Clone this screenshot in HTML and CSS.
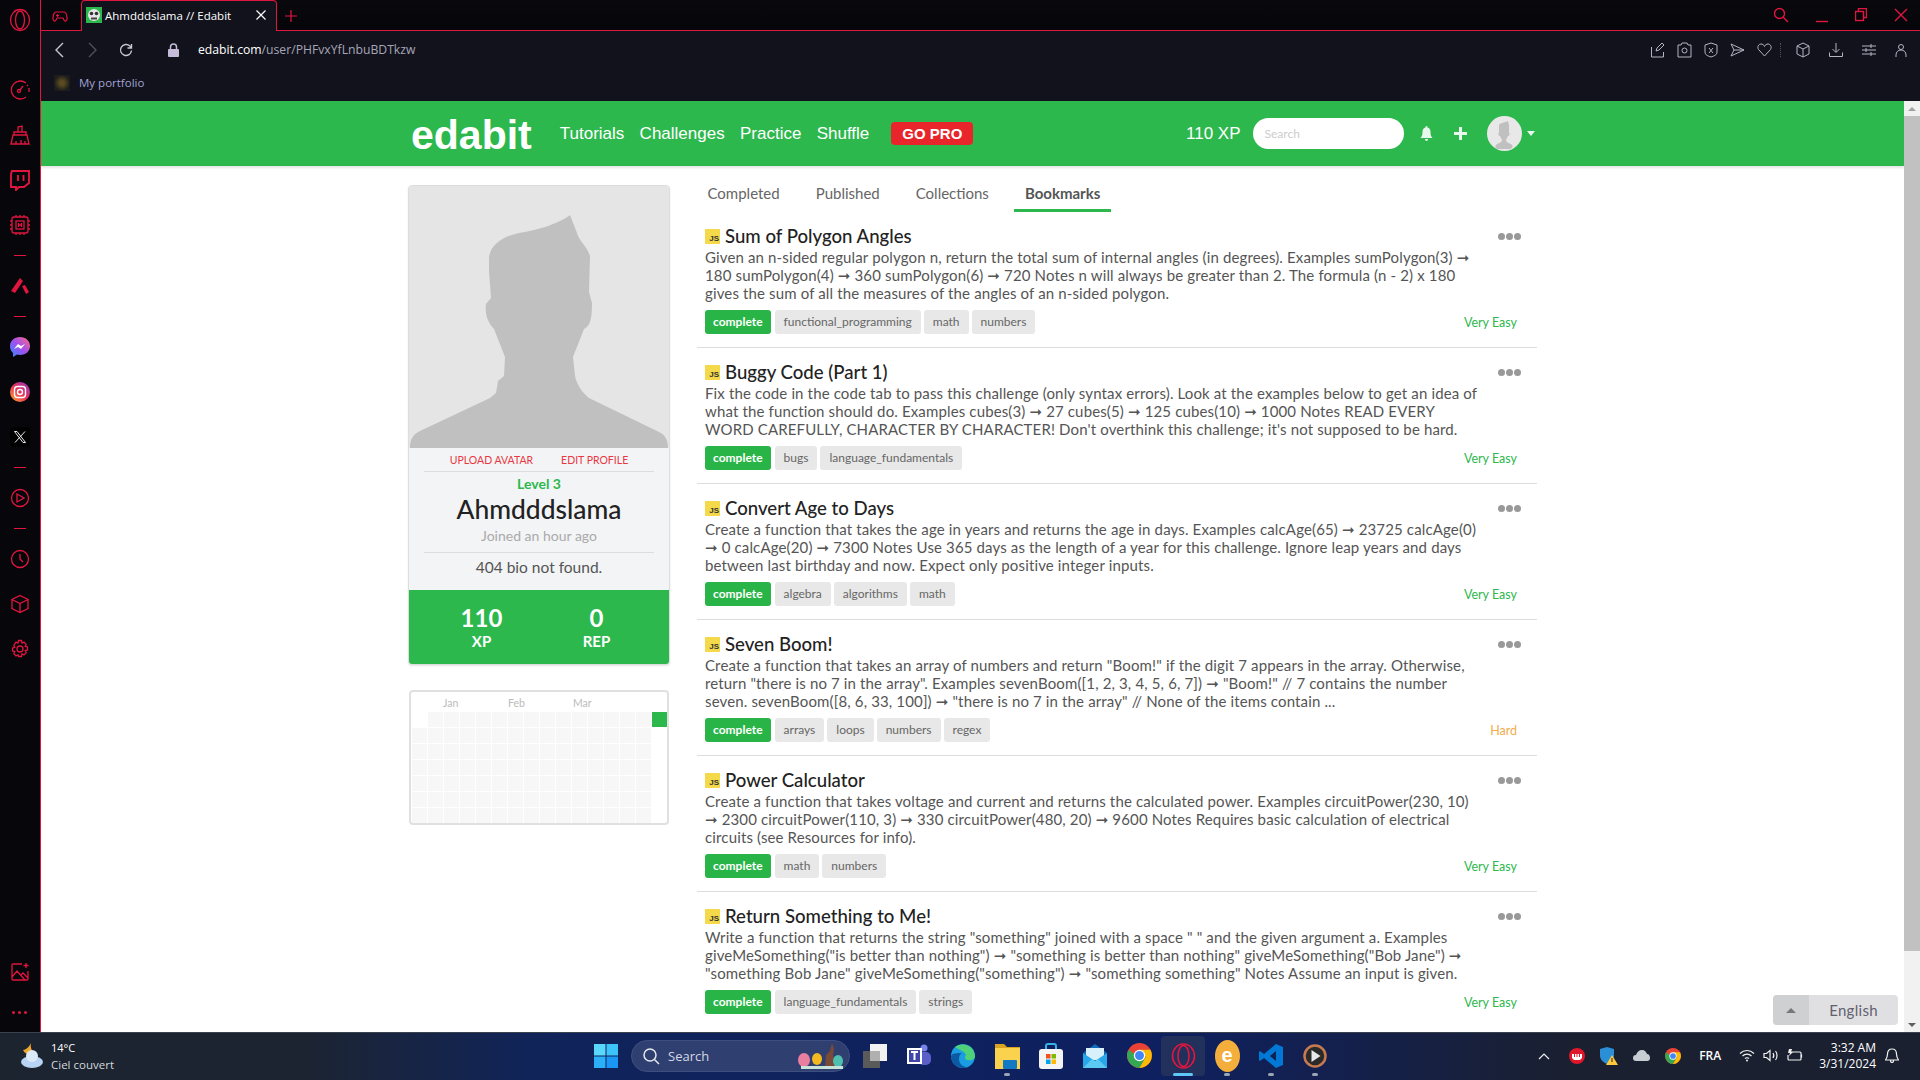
FILE: index.html
```html
<!DOCTYPE html>
<html lang="en">
<head>
  <meta charset="UTF-8">
  <title>Ahmdddslama // Edabit</title>
  <link rel="stylesheet" href="styles.css">
</head>
<body>

<div class="browser">
  <aside class="side">
    <div class="side-logo">
      <svg width="22" height="24" viewBox="0 0 22 24"><ellipse cx="11" cy="12" rx="9.5" ry="10.5"/><ellipse cx="11" cy="12" rx="4.5" ry="9"/></svg>
    </div>
    <div class="side-slot"><svg width="22" height="22" viewBox="0 0 22 22"><path d="M17 4A9 9 0 1 0 17 18M20 9v4M18 6l1 1"/><circle cx="10" cy="12" r="1.5"/><path d="M11 11l3-4"/></svg></div>
    <div class="side-slot"><svg width="22" height="22" viewBox="0 0 22 22"><path d="M2 20l2-9h14l2 9zM5 11V8h12v3M9 8V3l4-1v6M7 20v-3M12 20v-4M16 20v-3"/></svg></div>
    <div class="side-slot"><svg class="thick" width="22" height="22" viewBox="0 0 22 22"><path d="M3 2h17v12l-5 4h-5l-3 3v-3H2V5z"/><path d="M9 6v6M14.500 6v6"/></svg></div>
    <div class="side-slot"><svg width="22" height="22" viewBox="0 0 22 22"><rect x="3" y="3" width="16" height="16" rx="2"/><rect x="7" y="7" width="8" height="8"/><path d="M9.500 9v4M12.500 9v4M9.500 11h3M1 7h2M1 11h2M1 15h2M19 7h2M19 11h2M19 15h2M7 1v2M11 1v2M15 1v2M7 19v2M11 19v2M15 19v2"/></svg></div>
    <div class="side-dash"></div>
    <div class="side-slot"><svg width="20" height="20" viewBox="0 0 20 20"><path class="solid" d="M10 2l3 3-8 12-4-2zM12 10l3-1 4 7-3 2z"/></svg></div>
    <div class="side-dash"></div>
    <div class="side-slot">
      <svg width="22" height="22" viewBox="0 0 22 22"><defs><linearGradient id="msg" x1="0" y1="1" x2="1" y2="0"><stop offset="0" stop-color="#2f8cff"/><stop offset=".5" stop-color="#a050f0"/><stop offset="1" stop-color="#ff6a80"/></linearGradient></defs><path class="plain" fill="url(#msg)" d="M11 1c6 0 10 4 10 9s-4 9-10 9l-3-.4L4 21v-4C2 15 1 13 1 10c0-5 4-9 10-9z"/><path class="plain" fill="#fff" d="M5 13l4-5 3 2 4-2-4 5-3-2z"/></svg>
    </div>
    <div class="side-slot">
      <svg width="20" height="20" viewBox="0 0 20 20"><defs><linearGradient id="insta" x1="0" y1="1" x2="1" y2="0"><stop offset="0" stop-color="#fdb32b"/><stop offset=".5" stop-color="#e8305c"/><stop offset="1" stop-color="#8a3ac8"/></linearGradient></defs><circle class="plain" fill="url(#insta)" cx="10" cy="10" r="10"/><rect class="white" x="4.500" y="4.500" width="11" height="11" rx="3"/><circle class="white" cx="10" cy="10" r="2.500"/></svg>
    </div>
    <div class="side-slot"><span class="x-mark"><svg width="12" height="12" viewBox="0 0 12 12"><path class="white-thin" d="M.5.5h2.500l8.500 11H9zM11 .5L1 11.500"/></svg></span></div>
    <div class="side-dash"></div>
    <div class="side-slot"><svg width="20" height="20" viewBox="0 0 20 20"><circle cx="10" cy="10" r="8.500"/><path d="M7 6l7 4-7 4z"/></svg></div>
    <div class="side-dash"></div>
    <div class="side-slot"><svg width="20" height="20" viewBox="0 0 20 20"><circle cx="10" cy="10" r="8.500"/><path d="M10 5v5l3 3"/></svg></div>
    <div class="side-slot"><svg width="20" height="20" viewBox="0 0 20 20"><path d="M10 1.500l8 4v9l-8 4-8-4v-9zM2 5.500l8 4 8-4M10 9.500v9"/></svg></div>
    <div class="side-slot"><svg width="20" height="20" viewBox="0 0 20 20"><circle cx="10" cy="10" r="3"/><path d="M8.500 1.500h3l.5 2.500 2-.9 2.200 2.200-1 2.100 2.300.6v3l-2.300.6 1 2.100-2.200 2.200-2-.9-.5 2.500h-3L8 16l-2 .9-2.200-2.200 1-2.100-2.300-.6v-3l2.300-.6-1-2.100L6 3.100l2 .9z"/></svg></div>
    <div class="side-bottom">
      <div class="side-tail"><svg width="20" height="20" viewBox="0 0 20 20"><path d="M12 2H3a1 1 0 0 0-1 1v14a1 1 0 0 0 1 1h14a1 1 0 0 0 1-1V9M2 15l5-6 8 9M11 13l2-2 5 5M16 1v5M13.500 3.500h5"/></svg></div>
      <div class="side-tail"><span class="side-dots"><i></i><i></i><i></i></span></div>
    </div>
  </aside>

  <div class="window">
    <div class="tabbar">
      <div class="tab-game"><svg width="16" height="14" viewBox="0 0 16 14"><path d="M4 2h8c2 0 3 3 3 7 0 2-2 3-3 1l-1-2H5L4 10c-1 2-3 1-3-1 0-4 1-7 3-7z"/><path d="M4 5.500h3M5.500 4v3"/></svg></div>
      <div class="tab">
        <svg class="favicon" width="16" height="16" viewBox="0 0 16 16"><rect width="16" height="16" fill="#2db84d"/><circle cx="8" cy="8" r="6" fill="#e6e6e6"/><circle cx="5.500" cy="6.500" r="1.800" fill="#333"/><circle cx="10.500" cy="6.500" r="1.800" fill="#333"/><rect x="5" y="10.500" width="6" height="2" fill="#444"/></svg>
        <span class="tab-title">Ahmdddslama // Edabit</span>
        <svg class="tab-close" width="10" height="10" viewBox="0 0 10 10"><path d="M.500.500l9 9M9.500.500l-9 9"/></svg>
      </div>
      <div class="tab-add"><svg width="12" height="12" viewBox="0 0 12 12"><path d="M6 0v12M0 6h12"/></svg></div>
      <div class="win-btns">
        <svg width="16" height="16" viewBox="0 0 16 16"><circle cx="6.500" cy="6.500" r="5"/><path d="M10 10l5 5"/></svg>
        <svg class="win-min" width="12" height="16" viewBox="0 0 12 16"><path d="M0 14.500h12"/></svg>
        <svg width="12" height="14" viewBox="0 0 12 14"><rect x=".5" y="3.500" width="8" height="9"/><path d="M3.500 3.500v-3h8v9h-3"/></svg>
        <svg width="14" height="14" viewBox="0 0 14 14"><path d="M1 1l12 12M13 1L1 13"/></svg>
      </div>
    </div>

    <div class="toolbar">
      <div class="url-row">
        <svg class="nav-ico" width="10" height="16" viewBox="0 0 10 16"><path d="M8 1L1 8l7 7"/></svg>
        <svg class="nav-ico dim" width="10" height="16" viewBox="0 0 10 16"><path d="M2 1l7 7-7 7"/></svg>
        <svg class="nav-ico" width="14" height="14" viewBox="0 0 14 14"><path d="M12.500 7.500a5.500 5.500 0 1 1-1.600-4.400L12.500 5M12.500 1v4h-4"/></svg>
        <svg class="lock" width="11" height="14" viewBox="0 0 11 14"><rect y="6" width="11" height="8" rx="1"/><path d="M2.500 6V4a3 3 0 0 1 6 0v2" fill="none" stroke="#c4bcd8" stroke-width="1.500"/></svg>
        <div class="url"><b>edabit.com</b>/user/PHFvxYfLnbuBDTkzw</div>
        <div class="tools">
          <svg width="14" height="16" viewBox="0 0 14 16"><path d="M.5 5v10h12v-5M5 9l1-3 5-5 2 2-5 5z"/></svg>
          <svg width="15" height="16" viewBox="0 0 15 16"><path d="M1 3h3l1-2h5l1 2h3v12H1z"/><circle cx="7.500" cy="8.500" r="2.500"/></svg>
          <svg width="14" height="16" viewBox="0 0 14 16"><path d="M7 1l6 2v7c0 3-3 4-6 5-3-1-6-2-6-5V3zM5 6l4 5M9 6l-4 5"/></svg>
          <svg width="15" height="14" viewBox="0 0 15 14"><path d="M1 1l13 6-13 6 3-6zM4 7h10"/></svg>
          <svg width="15" height="14" viewBox="0 0 15 14"><path d="M7.500 13L1.500 6.500C0 4 1.500 1 4 1c1.500 0 3 1 3.500 2.500C8 2 9.500 1 11 1c2.500 0 4 3 2.500 5.500z"/></svg>
          <span class="tool-sep"></span>
          <svg width="14" height="16" viewBox="0 0 14 16"><path d="M7 1l6 3v8l-6 3-6-3V4zM1 4l6 3 6-3M7 7v8"/></svg>
          <svg width="14" height="14" viewBox="0 0 14 14"><path d="M7 0v9M3.500 6L7 9.500 10.500 6M.5 9.500v4h13v-4"/></svg>
          <svg width="14" height="12" viewBox="0 0 14 12"><path d="M0 2h14M0 6h14M0 10h14M9 0v4M4 4v4M9 8v4"/></svg>
          <svg width="12" height="14" viewBox="0 0 12 14"><circle cx="6" cy="4" r="2.500"/><path d="M1 14v-2c0-3 2-5 5-5s5 2 5 5v2"/></svg>
        </div>
      </div>
      <div class="bookmarks">
        <span class="bm-icon"></span>
        <span>My portfolio</span>
      </div>
    </div>

    <div class="viewport">
      <div class="page">
        <header class="site-head">
          <div class="wrap head-row">
            <div class="logo">edabit</div>
            <nav class="site-nav">
              <a>Tutorials</a>
              <a>Challenges</a>
              <a>Practice</a>
              <a>Shuffle</a>
            </nav>
            <div class="go-pro">GO PRO</div>
            <div class="head-right">
              <span class="head-xp">110 XP</span>
              <div class="search">Search</div>
              <svg class="head-ico" width="13" height="15" viewBox="0 0 13 15"><path d="M6.500 0c1 0 1 1 1 1.500 2 .5 3 2 3 4.500 0 3 .5 4 2 6H.5c1.500-2 2-3 2-6 0-2.500 1-4 3-4.500C5.500 1 5.500 0 6.500 0zM5 13h3c0 1-.5 2-1.500 2S5 14 5 13z"/></svg>
              <svg class="head-ico plus" width="13" height="13" viewBox="0 0 13 13"><path d="M5 0h3v5h5v3H8v5H5V8H0V5h5z"/></svg>
              <div class="head-avatar">
                <svg width="35" height="35" viewBox="0 0 35 35"><path fill="#c0c0c0" d="M21 5c-3 2-7 1-9 4v8c-1 0-1 3 1 3l2 4c0 3-4 3-6 5-1 1-1 3 1 4h13c3-1 3-3 2-4-2-2-6-2-6-5l2-4c2 0 2-3 1-3V9z"/></svg>
              </div>
              <span class="caret"></span>
            </div>
          </div>
        </header>

        <main class="wrap main">
          <div class="left">
            <section class="card">
              <div class="avatar">
                <svg width="260" height="262" viewBox="0 0 260 262"><path fill="#c0c0c0" d="M161 29C150 38 125 45 110 47 95 50 81 58 80 72L80 85 82 112 77 118C76 125 77 135 85 143L96 171 95 190 89 195 87 207 81 212 11 245C5 248 1 252 1 262H259C259 252 255 248 248 245L180 212C175 208 168 200 166 190L164 171 175 143C182 140 183 130 183 117L180 106 181 70C178 60 170 55 168 47z"/></svg>
              </div>
              <div class="card-body">
                <div class="card-links"><a>UPLOAD AVATAR</a><a>EDIT PROFILE</a></div>
                <div class="level">Level 3</div>
                <div class="name">Ahmdddslama</div>
                <div class="joined">Joined an hour ago</div>
                <div class="bio">404 bio not found.</div>
              </div>
              <div class="stats">
                <div class="stat"><b>110</b><span>XP</span></div>
                <div class="stat"><b>0</b><span>REP</span></div>
              </div>
            </section>

            <section class="heatmap">
              <div class="months"><span>Jan</span><span>Feb</span><span>Mar</span></div>
              <div class="cells">
                <i class="none"></i><i></i><i></i><i></i><i></i><i></i><i></i><i></i><i></i><i></i><i></i><i></i><i></i><i></i><i></i><i class="on"></i>
                <i></i><i></i><i></i><i></i><i></i><i></i><i></i><i></i><i></i><i></i><i></i><i></i><i></i><i></i><i></i><i class="none"></i>
                <i></i><i></i><i></i><i></i><i></i><i></i><i></i><i></i><i></i><i></i><i></i><i></i><i></i><i></i><i></i><i class="none"></i>
                <i></i><i></i><i></i><i></i><i></i><i></i><i></i><i></i><i></i><i></i><i></i><i></i><i></i><i></i><i></i><i class="none"></i>
                <i></i><i></i><i></i><i></i><i></i><i></i><i></i><i></i><i></i><i></i><i></i><i></i><i></i><i></i><i></i><i class="none"></i>
                <i></i><i></i><i></i><i></i><i></i><i></i><i></i><i></i><i></i><i></i><i></i><i></i><i></i><i></i><i></i><i class="none"></i>
                <i></i><i></i><i></i><i></i><i></i><i></i><i></i><i></i><i></i><i></i><i></i><i></i><i></i><i></i><i></i><i class="none"></i>
              </div>
            </section>
          </div>

          <div class="right">
            <div class="tabs">
              <a>Completed</a>
              <a>Published</a>
              <a>Collections</a>
              <a class="active">Bookmarks</a>
            </div>

            <article class="item">
              <div class="item-head"><span class="js">JS</span><h3>Sum of Polygon Angles</h3><span class="more"><i></i><i></i><i></i></span></div>
              <p>Given an n-sided regular polygon n, return the total sum of internal angles (in degrees). Examples sumPolygon(3) ➞ 180 sumPolygon(4) ➞ 360 sumPolygon(6) ➞ 720 Notes n will always be greater than 2. The formula (n - 2) x 180 gives the sum of all the measures of the angles of an n-sided polygon.</p>
              <div class="tags"><span class="tag done">complete</span><span class="tag">functional_programming</span><span class="tag">math</span><span class="tag">numbers</span><span class="diff">Very Easy</span></div>
            </article>

            <article class="item">
              <div class="item-head"><span class="js">JS</span><h3>Buggy Code (Part 1)</h3><span class="more"><i></i><i></i><i></i></span></div>
              <p>Fix the code in the code tab to pass this challenge (only syntax errors). Look at the examples below to get an idea of what the function should do. Examples cubes(3) ➞ 27 cubes(5) ➞ 125 cubes(10) ➞ 1000 Notes READ EVERY WORD CAREFULLY, CHARACTER BY CHARACTER! Don't overthink this challenge; it's not supposed to be hard.</p>
              <div class="tags"><span class="tag done">complete</span><span class="tag">bugs</span><span class="tag">language_fundamentals</span><span class="diff">Very Easy</span></div>
            </article>

            <article class="item">
              <div class="item-head"><span class="js">JS</span><h3>Convert Age to Days</h3><span class="more"><i></i><i></i><i></i></span></div>
              <p>Create a function that takes the age in years and returns the age in days. Examples calcAge(65) ➞ 23725 calcAge(0) ➞ 0 calcAge(20) ➞ 7300 Notes Use 365 days as the length of a year for this challenge. Ignore leap years and days between last birthday and now. Expect only positive integer inputs.</p>
              <div class="tags"><span class="tag done">complete</span><span class="tag">algebra</span><span class="tag">algorithms</span><span class="tag">math</span><span class="diff">Very Easy</span></div>
            </article>

            <article class="item">
              <div class="item-head"><span class="js">JS</span><h3>Seven Boom!</h3><span class="more"><i></i><i></i><i></i></span></div>
              <p>Create a function that takes an array of numbers and return "Boom!" if the digit 7 appears in the array. Otherwise, return "there is no 7 in the array". Examples sevenBoom([1, 2, 3, 4, 5, 6, 7]) ➞ "Boom!" // 7 contains the number seven. sevenBoom([8, 6, 33, 100]) ➞ "there is no 7 in the array" // None of the items contain ...</p>
              <div class="tags"><span class="tag done">complete</span><span class="tag">arrays</span><span class="tag">loops</span><span class="tag">numbers</span><span class="tag">regex</span><span class="diff hard">Hard</span></div>
            </article>

            <article class="item">
              <div class="item-head"><span class="js">JS</span><h3>Power Calculator</h3><span class="more"><i></i><i></i><i></i></span></div>
              <p>Create a function that takes voltage and current and returns the calculated power. Examples circuitPower(230, 10) ➞ 2300 circuitPower(110, 3) ➞ 330 circuitPower(480, 20) ➞ 9600 Notes Requires basic calculation of electrical circuits (see Resources for info).</p>
              <div class="tags"><span class="tag done">complete</span><span class="tag">math</span><span class="tag">numbers</span><span class="diff">Very Easy</span></div>
            </article>

            <article class="item">
              <div class="item-head"><span class="js">JS</span><h3>Return Something to Me!</h3><span class="more"><i></i><i></i><i></i></span></div>
              <p>Write a function that returns the string "something" joined with a space " " and the given argument a. Examples giveMeSomething("is better than nothing") ➞ "something is better than nothing" giveMeSomething("Bob Jane") ➞ "something Bob Jane" giveMeSomething("something") ➞ "something something" Notes Assume an input is given.</p>
              <div class="tags"><span class="tag done">complete</span><span class="tag">language_fundamentals</span><span class="tag">strings</span><span class="diff">Very Easy</span></div>
            </article>
          </div>
        </main>

        <div class="lang">
          <span class="lang-arrow"></span>
          <span class="lang-name">English</span>
        </div>
      </div>

      <div class="scrollbar">
        <span class="sb-up"></span>
        <div class="sb-thumb"></div>
        <span class="sb-down"></span>
      </div>
    </div>
  </div>
</div>

<footer class="taskbar">
  <div class="weather">
    <svg width="28" height="28" viewBox="0 0 28 28"><path fill="#f0a830" d="M14 1c-1 5 1 9 5 10-4 3-11 2-13-3 3 0 6-3 8-7z"/><ellipse cx="15" cy="20" rx="11" ry="6" fill="#b8d4f4"/><circle cx="15" cy="14" r="6" fill="#dce9f8"/></svg>
    <div class="weather-text"><b>14°C</b><span>Ciel couvert</span></div>
  </div>

  <div class="task-center">
    <svg class="win-logo" width="24" height="24" viewBox="0 0 24 24"><rect width="11.500" height="11.500" fill="#5ad8fb"/><rect x="12.500" width="11.500" height="11.500" fill="#3cc4fa"/><rect y="12.500" width="11.500" height="11.500" fill="#2bb0f8"/><rect x="12.500" y="12.500" width="11.500" height="11.500" fill="#1a96f5"/></svg>
    <div class="task-search">
      <svg width="18" height="18" viewBox="0 0 18 18"><circle cx="8" cy="8" r="6"/><path d="M12.500 12.500L17 17"/></svg>
      <span>Search</span>
      <svg class="easter" width="48" height="26" viewBox="0 0 48 26"><ellipse cx="7" cy="17" rx="6" ry="7" fill="#e87fa0"/><ellipse cx="20" cy="16" rx="5" ry="6" fill="#f4b820"/><path fill="#7a4a38" d="M28 24l1-12 4-4 2-8 2 6-1 6 3 12z"/><ellipse cx="41" cy="18" rx="5" ry="6" fill="#4ec0b0"/><rect x="4" y="23" width="42" height="3" fill="#c8e4d8"/></svg>
    </div>
    <div class="apps">
      <div class="app"><svg width="24" height="24" viewBox="0 0 24 24"><rect y="7" width="17" height="17" fill="#5a5a5a"/><rect x="7" width="17" height="17" fill="#f2f2f2"/><rect x="7" y="7" width="10" height="10" fill="#b0b0b0"/></svg></div>
      <div class="app"><svg width="26" height="26" viewBox="0 0 26 26"><circle cx="18" cy="5" r="3.500" fill="#7b83eb"/><rect x="12" y="9" width="13" height="13" rx="5" fill="#5b5fc7"/><rect x="1" y="5" width="15" height="16" fill="#fff"/><rect x="3" y="7" width="11" height="12" fill="#3f46a8"/><path fill="#fff" d="M5 8h7v2H9.500v7h-2v-7H5z"/></svg></div>
      <div class="app"><svg width="26" height="26" viewBox="0 0 26 26"><circle cx="13" cy="13" r="12" fill="#1b9de2"/><path fill="#4fd17a" d="M5 4c6-5 19-3 20 9 0 4-5 5-8 4-3-1-2-4-1-5-1-4-7-5-11-8z"/><path fill="#0c59a4" d="M1 13c0 7 6 12 12 12 2 0 3-.5 4-1-5 0-8-4-8-8 0-3 1-5 3-6-5 0-10 0-11 3z"/></svg></div>
      <div class="app has-dot"><svg width="25" height="26" viewBox="0 0 25 26"><path fill="#d9a520" d="M0 1h9l3 3h13v4H0z"/><rect y="5" width="25" height="21" fill="#fad24e"/><rect x="8" y="17" width="14" height="9" rx="1" fill="#1279c4"/></svg></div>
      <div class="app"><svg width="24" height="26" viewBox="0 0 24 26"><path d="M7 7V3a2 2 0 0 1 2-2h6a2 2 0 0 1 2 2v4" fill="none" stroke="#36b4e8" stroke-width="2"/><rect y="6" width="24" height="20" rx="3" fill="#f4f4f4"/><rect x="7" y="11" width="4.500" height="4.500" fill="#f25022"/><rect x="12.500" y="11" width="4.500" height="4.500" fill="#7fba00"/><rect x="7" y="16.500" width="4.500" height="4.500" fill="#00a4ef"/><rect x="12.500" y="16.500" width="4.500" height="4.500" fill="#ffb900"/></svg></div>
      <div class="app"><svg width="26" height="26" viewBox="0 0 26 26"><path fill="#0f6cbd" d="M13 1L1 10l12 8 12-8z"/><rect x="4" y="5" width="18" height="12" fill="#d8f0fa"/><path fill="#28a8ea" d="M1 10v15h24V10L13 18z"/><path fill="#5cc8f4" d="M1 25l9-9 3 2 3-2 9 9z"/></svg></div>
      <div class="app"><svg width="25" height="25" viewBox="0 0 24 24"><circle cx="12" cy="12" r="12" fill="#ea4335"/><path fill="#34a853" d="M1.500 6.500A12 12 0 0 0 12 24l6-10.500H12L7 10.500z"/><path fill="#fbbc05" d="M12 24A12 12 0 0 0 22.500 6.500H12l6 7z"/><circle cx="12" cy="12" r="5.500" fill="#fff"/><circle cx="12" cy="12" r="4.300" fill="#4285f4"/></svg></div>
      <div class="app active"><svg width="25" height="26" viewBox="0 0 25 26"><ellipse class="opera" cx="12.500" cy="13" rx="11" ry="12"/><ellipse class="opera" cx="12.500" cy="13" rx="5.500" ry="10.500"/></svg></div>
      <div class="app has-dot"><span class="eda-ico">e</span></div>
      <div class="app has-dot"><svg width="24" height="26" viewBox="0 0 24 26"><path fill="#0078d4" d="M17 1l7 3v18l-7 3L5 15l-4 3-1-1v-8l1-1 4 3zM17 8l-6 5 6 5z"/></svg></div>
      <div class="app has-dot"><svg width="24" height="26" viewBox="0 0 24 26"><circle cx="12" cy="13" r="10.500" fill="#2a2a2a" stroke="#c57a50" stroke-width="2.500"/><path fill="#e8e8e8" d="M8.500 7l9 6-9 6z"/></svg></div>
    </div>
  </div>

  <div class="tray">
    <svg class="tray-line chev" width="12" height="8" viewBox="0 0 12 8"><path d="M1 7l5-5 5 5"/></svg>
    <svg width="16" height="16" viewBox="0 0 16 16"><circle cx="8" cy="8" r="8" fill="#e0162c"/><path fill="#fff" d="M3 6h10v4l-2 2H5l-2-2z"/><path fill="#e0162c" d="M5 6h1v3H5zM7.500 6h1v3h-1zM10 6h1v3h-1z"/></svg>
    <svg width="18" height="18" viewBox="0 0 18 18"><path fill="#2b8fd8" d="M7 0l7 2v6c0 5-3 7-7 9-4-2-7-4-7-9V2z"/><path fill="#ffc83d" d="M12 8l6 10H6z"/><rect x="11.500" y="11" width="1" height="4" fill="#222"/></svg>
    <svg width="17" height="11" viewBox="0 0 17 11"><path fill="#c8cdd4" d="M3 11a3 3 0 0 1 0-6c1-3 3-5 6-5s4 2 5 4c2 0 3 2 3 4s-1 3-3 3z"/></svg>
    <svg width="16" height="16" viewBox="0 0 24 24"><circle cx="12" cy="12" r="12" fill="#ea4335"/><path fill="#34a853" d="M1.500 6.500A12 12 0 0 0 12 24l6-10.500H12L7 10.500z"/><path fill="#fbbc05" d="M12 24A12 12 0 0 0 22.500 6.500H12l6 7z"/><circle cx="12" cy="12" r="5.500" fill="#fff"/><circle cx="12" cy="12" r="4.300" fill="#4285f4"/></svg>
    <span class="tray-lang">FRA</span>
    <svg class="tray-line" width="16" height="13" viewBox="0 0 16 13"><path d="M1 4.500c4-4 10-4 14 0M3.500 7c2.500-2.500 6.500-2.500 9 0M6 9.500c1-1 3-1 4 0"/><circle class="white-dot" cx="8" cy="11.500" r="1"/></svg>
    <svg class="tray-line near" width="16" height="13" viewBox="0 0 16 13"><path d="M1 4.500v4h2.500L7 11.500V1.500L3.500 4.500zM10 4c1 1.500 1 3.500 0 5M12.500 2c2 2.500 2 6.500 0 9"/></svg>
    <svg class="tray-line near" width="16" height="13" viewBox="0 0 16 13"><path d="M4 3h9a1 1 0 0 1 1 1v6a1 1 0 0 1-1 1H2a1 1 0 0 1-1-1V6M14.500 5.500v3"/><path class="fill-white" d="M2 0l3 0-1 3h2L2 7l1-3H1z"/></svg>
    <div class="clock"><span>3:32 AM</span><span>3/31/2024</span></div>
    <svg class="tray-line tray-bell" width="14" height="15" viewBox="0 0 14 15"><path d="M7 1c3 0 4.500 2 4.500 5 0 2 .5 4 2 6H.5c1.500-2 2-4 2-6C2.500 3 4 1 7 1zM5.500 12.500c0 1 .5 2 1.500 2s1.500-1 1.500-2"/></svg>
  </div>
</footer>

</body>
</html>
```

FILE: styles.css
```css
* {
  box-sizing: border-box;
}
html, body {
  height: 100%;
}
body {
  margin: 0;
  width: 1920px;
  height: 1080px;
  overflow: hidden;
  display: flex;
  flex-direction: column;
  font-family: "Lato", "DejaVu Sans", sans-serif;
  background: #000;
}
.browser {
  flex: 1;
  display: flex;
  min-height: 0;
}

/* opera side strip */
.side {
  width: 41px;
  flex: none;
  background: #06060b;
  border-right: 1px solid #e0163f;
  display: flex;
  flex-direction: column;
  align-items: center;
  padding-right: 1px;
}
.side svg {
  display: block;
  fill: none;
  stroke: #e0163f;
  stroke-width: 1.3;
}
.side svg.thick {
  stroke-width: 1.9;
}
.side .solid {
  fill: #e0163f;
  stroke: none;
  fill-rule: evenodd;
}
.side .plain {
  stroke: none;
}
.side .white {
  stroke: #fff;
  stroke-width: 1.400;
}
.side .white-thin {
  stroke: #e8e8e8;
  stroke-width: 1;
}
.side-logo {
  height: 40px;
  margin-bottom: 27.5px;
  display: flex;
  align-items: center;
}
.side-slot {
  height: 45px;
  display: flex;
  align-items: center;
  justify-content: center;
}
.side-dash {
  height: 16px;
  width: 12px;
  display: flex;
  align-items: center;
}
.side-dash::after {
  content: "";
  width: 12px;
  height: 1px;
  background: #e0163f;
}
.x-mark {
  width: 20px;
  height: 20px;
  border-radius: 4px;
  background: #000;
  display: flex;
  align-items: center;
  justify-content: center;
}
.side-bottom {
  margin-top: auto;
}
.side-tail {
  height: 40px;
  display: flex;
  align-items: center;
  justify-content: center;
}
.side-dots {
  display: flex;
  gap: 3px;
}
.side-dots i {
  width: 3px;
  height: 3px;
  border-radius: 50%;
  background: #e0163f;
}

/* browser window */
.window {
  flex: 1;
  min-width: 0;
  display: flex;
  flex-direction: column;
}
.tabbar {
  height: 31px;
  flex: none;
  display: flex;
  background: linear-gradient(#08080d, #06060a);
  border-bottom: 1px solid #e0163f;
  position: relative;
  padding-left: 40px;
}
.tabbar svg {
  fill: none;
  stroke: #e0163f;
  stroke-width: 1.2;
}
.tab-game {
  position: absolute;
  left: 11px;
  top: 8px;
}
.tab {
  width: 196px;
  height: 31px;
  background: #12121c;
  border: 1px solid #e0163f;
  border-bottom: none;
  border-radius: 4px 4px 0 0;
  display: flex;
  align-items: center;
  padding: 0 10px 2px 4px;
  gap: 3px;
}
.tab .favicon {
  stroke: none;
}
.tab .favicon * {
  stroke: none;
}
.tab-title {
  flex: 1;
  color: #fff;
  font: 11.500px "Open Sans", sans-serif;
  white-space: nowrap;
}
.tab .tab-close {
  stroke: #fff;
}
.tab-add {
  padding: 6px 0 0 8px;
}
.win-btns {
  margin-left: auto;
  display: flex;
  align-items: center;
  gap: 27px;
  padding-right: 12px;
  height: 30px;
}
.win-btns svg {
  stroke-width: 1.400;
}
.toolbar {
  height: 70px;
  flex: none;
  background: #12121c;
  display: flex;
  flex-direction: column;
}
.url-row {
  height: 37px;
  display: flex;
  align-items: center;
  padding-left: 14px;
}
.nav-ico {
  fill: none;
  stroke: #c8c8d4;
  stroke-width: 1.4;
  margin-right: 22px;
}
.nav-ico.dim {
  stroke: #50505c;
}
.lock {
  fill: #c4bcd8;
  margin-left: 13px;
}
.url {
  margin-left: 19px;
  color: #a6a6b8;
  font: 12.200px "Open Sans", sans-serif;
  white-space: nowrap;
}
.url b {
  color: #fff;
  font-weight: 400;
}
.tools {
  margin-left: auto;
  display: flex;
  align-items: center;
  gap: 12px;
  padding-right: 13px;
}
.tools svg {
  fill: none;
  stroke: #b4b4c4;
  stroke-width: 1;
}
.tool-sep {
  height: 14px;
  border-left: 1px dotted #50505c;
  margin: 0 -4px;
}
.tools svg:nth-of-type(n+6) {
  margin-left: 7px;
}
.bookmarks {
  height: 29px;
  display: flex;
  align-items: center;
  padding-left: 15px;
  gap: 9px;
  color: #a0a4d4;
  font: 11.500px "Open Sans", sans-serif;
}
.bm-icon {
  width: 16px;
  height: 16px;
  background: radial-gradient(circle, #5a4a20 20%, #1c1c1c 70%);
  margin-left: -2px;
}

/* page */
.viewport {
  flex: 1;
  min-height: 0;
  display: flex;
}
.page {
  flex: 1;
  min-width: 0;
  background: #fff;
  position: relative;
  overflow: hidden;
}
.wrap {
  width: 1129px;
  margin: 0 auto;
}
.site-head {
  height: 65px;
  background: #2db84d;
  box-shadow: 0 2px 2px rgba(0,0,0,0.1);
}
.head-row {
  height: 65px;
  display: flex;
  align-items: center;
  color: #fff;
  padding: 0 2.500px 0 3px;
}
.logo {
  font: bold 41px "Liberation Sans", Arial, sans-serif;
  margin-top: 3px;
}
.site-nav {
  display: flex;
  gap: 15.300px;
  margin-left: 28px;
  font: 17px "Liberation Sans", Arial, sans-serif;
}
.go-pro {
  margin-left: 22px;
  width: 82px;
  height: 23px;
  line-height: 23px;
  text-align: center;
  background: #e8252b;
  border-radius: 4px;
  font: bold 15px/23px "Liberation Sans", Arial, sans-serif;
}
.head-right {
  margin-left: auto;
  display: flex;
  align-items: center;
}
.head-xp {
  font: 17px "Liberation Sans", Arial, sans-serif;
  margin-right: 12px;
}
.search {
  width: 151px;
  height: 31px;
  border-radius: 16px;
  background: #fff;
  color: #ccc;
  font-size: 12px;
  line-height: 31px;
  padding-left: 12px;
  margin-right: 16px;
}
.head-ico {
  fill: #e8f8ec;
}
.head-ico.plus {
  margin-left: 21px;
}
.head-avatar {
  margin-left: 20px;
  width: 35px;
  height: 35px;
  border-radius: 50%;
  background: #e8e8e8;
  overflow: hidden;
}
.caret {
  margin-left: 5px;
  border-top: 5px solid #e8f8ec;
  border-left: 4.500px solid transparent;
  border-right: 4.500px solid transparent;
}
.main {
  display: flex;
  gap: 27px;
  padding-top: 19px;
}

/* left column */
.left {
  width: 262px;
  flex: none;
}
.card {
  border: 1px solid #ddd;
  border-radius: 4px;
  overflow: hidden;
  background: #f3f4f6;
  box-shadow: 0 1px 2px rgba(0,0,0,0.1);
}
.avatar {
  height: 262px;
  background: #e5e5e5;
}
.avatar svg {
  display: block;
}
.card-body {
  height: 142px;
  padding: 0 15px;
  text-align: center;
}
.card-links {
  height: 24px;
  line-height: 24px;
  display: flex;
  justify-content: center;
  gap: 28px;
  border-bottom: 1px solid #ddd;
  color: #e8383f;
  font-size: 10.500px;
}
.level {
  margin-top: 3px;
  color: #2db84d;
  font-size: 14px;
  font-weight: 700;
  line-height: 18px;
}
.name {
  color: #222;
  font-size: 26.400px;
  font-weight: 500;
  line-height: 32px;
}
.joined {
  height: 28px;
  line-height: 22px;
  color: #aaa;
  font-size: 14px;
  border-bottom: 1px solid #ddd;
}
.bio {
  margin-top: 2px;
  color: #555;
  font-size: 15.500px;
  line-height: 24px;
}
.stats {
  height: 74px;
  background: #2db84d;
  color: #fff;
  display: flex;
  padding: 0 15px;
}
.stat {
  flex: 1;
  display: flex;
  flex-direction: column;
  align-items: center;
  justify-content: center;
}
.stat b {
  font-size: 24px;
  line-height: 28px;
}
.stat span {
  font-size: 15px;
  font-weight: 700;
  line-height: 18px;
}
.heatmap {
  margin-top: 25px;
  margin-left: 1px;
  width: 260px;
  height: 135px;
  border: 2px solid #e0e0e0;
  border-radius: 4px;
  padding-left: 1px;
}
.months {
  height: 20px;
  display: flex;
  padding-left: 31px;
  color: #bbb;
  font-size: 10.500px;
  line-height: 22px;
}
.months span {
  width: 65px;
}
.cells {
  display: grid;
  grid-template-columns: repeat(16, 15px);
  grid-auto-rows: 15px;
  gap: 1px;
}
.cells i {
  background: #f7f7f7;
}
.cells i.none {
  background: none;
}
.cells i.on {
  background: #2db84d;
}

/* challenge list */
.right {
  flex: 1;
  min-width: 0;
}
.tabs {
  display: flex;
  gap: 15px;
  height: 27px;
  margin-bottom: 0;
}
.tabs a {
  padding: 0 10.500px;
  height: 27px;
  line-height: 16px;
  color: #666;
  font-size: 15px;
}
.tabs a.active {
  color: #555;
  font-weight: 700;
  border-bottom: 3px solid #2db84d;
}
.item {
  height: 136px;
  padding: 12px 18px 0 8px;
  border-bottom: 1px solid #ddd;
}
.item:last-child {
  border-bottom: none;
}
.item-head {
  display: flex;
  align-items: center;
  height: 24px;
}
.js {
  width: 15px;
  height: 15px;
  background: #f4d94a;
  color: #333;
  font: bold 8px/20px "Liberation Sans", Arial, sans-serif;
  text-align: right;
  padding-right: 1px;
  margin-right: 5px;
  overflow: hidden;
}
.item h3 {
  margin: 0;
  color: #222;
  font-size: 18.600px;
  font-weight: 500;
  line-height: 24px;
}
.more {
  margin-left: auto;
  margin-right: -2px;
  display: flex;
  gap: 1px;
}
.more i {
  width: 7px;
  height: 7px;
  border-radius: 50%;
  background: #999;
}
.item p {
  margin: 0;
  width: 772px;
  color: #555;
  font-size: 15px;
  letter-spacing: .14px;
  line-height: 18px;
}
.tags {
  display: flex;
  align-items: center;
  gap: 3px;
  margin-top: 8px;
}
.tag {
  height: 24px;
  line-height: 24px;
  padding: 0 9px;
  border-radius: 3px;
  background: #e8e8e8;
  color: #666;
  font-size: 12px;
}
.tag.done {
  padding: 0 8px;
  margin-right: 1px;
  background: #28b446;
  color: #fff;
  font-weight: 700;
}
.diff {
  margin-left: auto;
  margin-right: 2px;
  color: #2db84d;
  font-size: 12.500px;
}
.diff.hard {
  color: #f0ad4e;
}
.lang {
  position: absolute;
  right: 6px;
  bottom: 7px;
  width: 125px;
  height: 30px;
  display: flex;
  border-radius: 4px;
  overflow: hidden;
  background: #e0e0e2;
  color: #606070;
  font-size: 15px;
}
.lang-arrow {
  width: 36px;
  background: #cfd0d2;
  display: flex;
  align-items: center;
  justify-content: center;
}
.lang-arrow::after {
  content: "";
  border-bottom: 5px solid #777;
  border-left: 5px solid transparent;
  border-right: 5px solid transparent;
}
.lang-name {
  flex: 1;
  text-align: center;
  line-height: 30px;
  letter-spacing: .3px;
}
.scrollbar {
  width: 16px;
  flex: none;
  background: #f1f1f1;
  display: flex;
  flex-direction: column;
  align-items: center;
}
.sb-up, .sb-down {
  height: 15px;
  flex: none;
  display: flex;
  align-items: center;
  justify-content: center;
}
.sb-up::after {
  content: "";
  border-bottom: 4px solid #a0a0a0;
  border-left: 4px solid transparent;
  border-right: 4px solid transparent;
}
.sb-down {
  margin-top: auto;
}
.sb-down::after {
  content: "";
  border-top: 4px solid #606060;
  border-left: 4px solid transparent;
  border-right: 4px solid transparent;
}
.sb-thumb {
  width: 16px;
  height: 835px;
  background: #c1c1c1;
}

/* windows taskbar */
.taskbar {
  height: 48px;
  flex: none;
  display: flex;
  align-items: center;
  position: relative;
  padding-bottom: 2px;
  background: linear-gradient(90deg, #1c2430 0%, #1c2432 16%, #10245a 28%, #0e2060 60%, #14204c 70%, #1a2030 82%, #1a2030 100%);
  border-top: 1px solid #3a4250;
  color: #fff;
  font-family: "Open Sans", sans-serif;
}
.weather {
  display: flex;
  align-items: center;
  gap: 6px;
  padding-left: 17px;
  width: 300px;
}
.weather-text {
  display: flex;
  flex-direction: column;
  font-size: 11.500px;
  line-height: 17px;
}
.weather-text b {
  font-weight: 400;
  font-size: 11px;
}
.weather-text span {
  color: #d4d8de;
}
.task-center {
  position: absolute;
  left: 594px;
  top: 0;
  bottom: 2px;
  display: flex;
  align-items: center;
}
.win-logo {
  margin-right: 13px;
}
.task-search {
  width: 219px;
  height: 32px;
  border-radius: 16px;
  background: #2f3f70;
  display: flex;
  align-items: center;
  padding-left: 10px;
  gap: 8px;
  font-size: 13px;
  color: #d4d8e4;
  border: 1px solid #3e4e80;
  margin-right: 3px;
}
.task-search > svg:first-child {
  fill: none;
  stroke: #e4e8f0;
  stroke-width: 1.500;
}
.easter {
  margin-left: auto;
  margin-right: 4px;
}
.apps {
  display: flex;
  align-items: center;
}
.app {
  width: 44px;
  height: 40px;
  display: flex;
  align-items: center;
  justify-content: center;
  position: relative;
}
.app.has-dot::after {
  content: "";
  position: absolute;
  bottom: 0;
  left: 19px;
  width: 6px;
  height: 3px;
  border-radius: 2px;
  background: #9aa4b4;
}
.app.active {
  background: #22305c;
  border-radius: 4px;
}
.app.active::after {
  content: "";
  position: absolute;
  bottom: 0;
  left: 12px;
  width: 20px;
  height: 3px;
  border-radius: 2px;
  background: #60c8f8;
}
.opera {
  fill: none;
  stroke: #e0163f;
  stroke-width: 1.600;
}
.eda-ico {
  width: 25px;
  height: 32px;
  border-radius: 50%;
  background: #f4ae3c;
  color: #fff;
  text-align: center;
  font: bold 20px/30px "Liberation Sans", Arial, sans-serif;
}
.tray {
  margin-left: auto;
  display: flex;
  align-items: center;
  height: 100%;
  gap: 15px;
  padding-right: 21px;
  font-size: 12px;
}
.tray-line {
  fill: none;
  stroke: #f0f0f0;
  stroke-width: 1.200;
}
.tray-line .white-dot, .tray-line .fill-white {
  fill: #f0f0f0;
  stroke: none;
}
.tray-line.chev {
  margin-right: 4px;
}
.tray-line.near {
  margin-left: -7px;
}
.tray-lang {
  margin: 0 3px;
  font-weight: 600;
}
.clock {
  display: flex;
  flex-direction: column;
  align-items: flex-end;
  font-size: 12px;
  line-height: 16px;
  margin-left: 1px;
}
.tray-bell {
  margin-left: -6px;
}
```
